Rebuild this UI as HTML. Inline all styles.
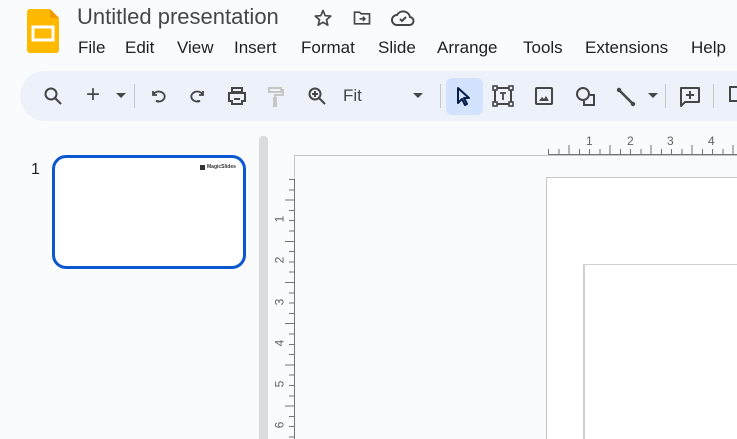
<!DOCTYPE html>
<html style="overflow:hidden;height:439px"><head><meta charset="utf-8"><style>
body{margin:0;width:737px;height:439px;overflow:hidden;background:#f9fbfd;font-family:"Liberation Sans",Arial,sans-serif;position:relative}
.a{position:absolute}
.menu span{position:absolute;top:38px;font-size:17px;color:#1f1f1f}
.tb{left:20px;top:71px;width:717px;height:50px;background:#edf2fa;border-radius:25px 0 0 25px}
svg{position:absolute;overflow:visible}
.sep{position:absolute;top:84px;width:1px;height:24px;background:#c4c7c5}
</style></head><body>
<svg style="left:27px;top:9px" width="32" height="44" viewBox="0 0 32 44"><path d="M3 0h20l9 9v32a3 3 0 0 1-3 3H3a3 3 0 0 1-3-3V3a3 3 0 0 1 3-3z" fill="#ffba00"/><path d="M23 0l9 9h-9z" fill="#f29900"/><rect x="6" y="18" width="20" height="13" fill="none" stroke="#fff" stroke-width="3"/></svg>
<div class="a" style="left:77px;top:4px;font-size:22px;color:#444746">Untitled presentation</div>
<svg style="left:313px;top:8px" width="20" height="20" viewBox="0 0 24 24"><path d="M12 3l2.6 6.2 6.7.5-5.1 4.4 1.6 6.5L12 17l-5.8 3.6 1.6-6.5-5.1-4.4 6.7-.5z" fill="none" stroke="#444746" stroke-width="2" stroke-linejoin="round"/></svg>
<svg style="left:352px;top:8px" width="20" height="20" viewBox="0 0 24 24"><path d="M3 5h6l2 2h10v12H3z" fill="none" stroke="#444746" stroke-width="2"/><path d="M9 13h6m-2-2.5L15.5 13 13 15.5" fill="none" stroke="#444746" stroke-width="2"/></svg>
<svg style="left:391px;top:8px" width="24" height="20" viewBox="0 0 24 20"><path d="M6 17a5 5 0 0 1 0-10 7 7 0 0 1 13 2 4 4 0 0 1-1 8z" fill="none" stroke="#444746" stroke-width="2"/><path d="M9 11l2 2 4-4" fill="none" stroke="#444746" stroke-width="2"/></svg>
<div class="menu"><span style="left:78px">File</span><span style="left:125px">Edit</span><span style="left:177px">View</span><span style="left:234px">Insert</span><span style="left:301px">Format</span><span style="left:378px">Slide</span><span style="left:437px">Arrange</span><span style="left:523px">Tools</span><span style="left:585px">Extensions</span><span style="left:691px">Help</span></div>
<div class="a tb"></div>
<svg style="left:43px;top:86px" width="20" height="20" viewBox="0 0 20 20"><circle cx="8" cy="8" r="5.5" fill="none" stroke="#444746" stroke-width="2"/><path d="M12 12l6 6" stroke="#444746" stroke-width="2.2"/></svg>
<div class="a" style="left:86px;top:81px;font-size:24px;color:#444746">+</div>
<svg style="left:116px;top:93px" width="10" height="6"><path d="M0 0h10L5 5z" fill="#444746"/></svg>
<div class="sep" style="left:134px"></div>
<svg style="left:149px;top:87px" width="18" height="18" viewBox="0 0 18 18"><path d="M4 4v4h4M4 8a6 5 0 1 1 3 6h3" fill="none" stroke="#444746" stroke-width="1.8"/></svg>
<svg style="left:189px;top:87px" width="18" height="18" viewBox="0 0 18 18"><path d="M14 4v4h-4M14 8a6 5 0 1 0-3 6H8" fill="none" stroke="#444746" stroke-width="1.8"/></svg>
<svg style="left:227px;top:86px" width="20" height="20" viewBox="0 0 20 20"><path d="M5 2h10v4H5zM2 7h16v8h-3v3H5v-3H2z" fill="none" stroke="#444746" stroke-width="2"/><path d="M7 13h6" stroke="#444746" stroke-width="2"/></svg>
<svg style="left:266px;top:86px" width="20" height="22" viewBox="0 0 20 22"><path d="M3 2h12v4H3zM15 4h2v5H9v3M8 12h2v8H8z" fill="none" stroke="#c4c7c5" stroke-width="2"/></svg>
<svg style="left:307px;top:86px" width="20" height="20" viewBox="0 0 20 20"><circle cx="8" cy="8" r="5.5" fill="none" stroke="#444746" stroke-width="2"/><path d="M12 12l6 6M5 8h6M8 5v6" stroke="#444746" stroke-width="2"/></svg>
<div class="a" style="left:343px;top:86px;font-size:17px;color:#444746">Fit</div>
<svg style="left:413px;top:93px" width="10" height="6"><path d="M0 0h10L5 5z" fill="#444746"/></svg>
<div class="sep" style="left:440px"></div>
<div class="a" style="left:446px;top:78px;width:37px;height:37px;background:#d3e3fd;border-radius:6px"></div>
<svg style="left:455px;top:86px" width="18" height="22" viewBox="0 0 18 22"><path d="M3 2v15l4-4 3 6 2-1-3-6h5z" fill="none" stroke="#041e49" stroke-width="2" stroke-linejoin="round"/></svg>
<svg style="left:492px;top:85px" width="22" height="22" viewBox="0 0 22 22"><rect x="3" y="3" width="16" height="16" fill="none" stroke="#444746" stroke-width="2"/><rect x="1" y="1" width="4" height="4" fill="#edf2fa" stroke="#444746" stroke-width="1.6"/><rect x="17" y="1" width="4" height="4" fill="#edf2fa" stroke="#444746" stroke-width="1.6"/><rect x="1" y="17" width="4" height="4" fill="#edf2fa" stroke="#444746" stroke-width="1.6"/><rect x="17" y="17" width="4" height="4" fill="#edf2fa" stroke="#444746" stroke-width="1.6"/><path d="M8 8h6M11 8v7" stroke="#444746" stroke-width="1.8"/></svg>
<svg style="left:535px;top:87px" width="18" height="18" viewBox="0 0 18 18"><rect x="1" y="1" width="16" height="16" rx="1" fill="none" stroke="#444746" stroke-width="2"/><path d="M4 14l3-4 2 2 2-3 3 5z" fill="#444746"/></svg>
<svg style="left:575px;top:86px" width="22" height="22" viewBox="0 0 22 22"><circle cx="8" cy="8" r="6" fill="none" stroke="#444746" stroke-width="2"/><path d="M15 9h4v10H9v-4" fill="none" stroke="#444746" stroke-width="2"/></svg>
<svg style="left:616px;top:87px" width="20" height="20" viewBox="0 0 20 20"><path d="M3 3l14 14" stroke="#444746" stroke-width="2.5"/><circle cx="3" cy="3" r="2.2" fill="#444746"/><circle cx="17" cy="17" r="2.2" fill="#444746"/></svg>
<svg style="left:648px;top:93px" width="10" height="6"><path d="M0 0h10L5 5z" fill="#444746"/></svg>
<div class="sep" style="left:665px"></div>
<svg style="left:679px;top:86px" width="22" height="22" viewBox="0 0 22 22"><path d="M2 2h18v14H6l-4 4z" fill="none" stroke="#444746" stroke-width="2" stroke-linejoin="round"/><path d="M7 9h8M11 5v8" stroke="#444746" stroke-width="2"/></svg>
<div class="sep" style="left:713px"></div>
<div class="a" style="left:729px;top:86px;width:10px;height:16px;border:2px solid #444746;box-sizing:border-box"></div>
<div class="a" style="left:31px;top:161px;font-size:16px;color:#1f1f1f">1</div>
<div class="a" style="left:52px;top:155px;width:194px;height:114px;box-sizing:border-box;border:3px solid #0b57d0;border-radius:14px;background:#fff"></div>
<div class="a" style="left:200px;top:165px;width:5px;height:5px;background:#333"></div>
<div class="a" style="left:207px;top:164px;font-size:5px;font-weight:bold;color:#333">MagicSlides</div>
<div class="a" style="left:259px;top:136px;width:9px;height:303px;background:#dadce0;border-radius:4px 4px 0 0"></div>
<div class="a" style="left:294px;top:155px;width:443px;height:284px;border-top:1px solid #c4c7c5;border-left:1px solid #c4c7c5;box-sizing:border-box"></div>
<div class="a" style="left:548px;top:149px;width:189px;height:6px;background:repeating-linear-gradient(90deg,#70757a 0 1px,transparent 1px 10.25px)"></div>
<div class="a" style="left:548px;top:145px;width:189px;height:10px;background:repeating-linear-gradient(90deg,transparent 0 20.5px,#70757a 20.5px 21.5px,transparent 21.5px 41px)"></div>
<div class="a" style="left:548px;top:154px;width:189px;height:1px;background:#70757a"></div>
<div class="a" style="font-size:12px;color:#5f6368;top:134px;left:586px">1</div>
<div class="a" style="font-size:12px;color:#5f6368;top:134px;left:627px">2</div>
<div class="a" style="font-size:12px;color:#5f6368;top:134px;left:667px">3</div>
<div class="a" style="font-size:12px;color:#5f6368;top:134px;left:708px">4</div>
<div class="a" style="left:289px;top:179px;width:6px;height:260px;background:repeating-linear-gradient(180deg,#70757a 0 1px,transparent 1px 10.3px)"></div>
<div class="a" style="left:285px;top:179px;width:10px;height:260px;background:repeating-linear-gradient(180deg,transparent 0 20.6px,#70757a 20.6px 21.6px,transparent 21.6px 41.2px)"></div>
<div class="a" style="left:294px;top:179px;width:1px;height:260px;background:#70757a"></div>
<div class="a" style="left:276px;top:212px;font-size:12px;color:#5f6368;transform:rotate(-90deg)">1</div>
<div class="a" style="left:276px;top:253px;font-size:12px;color:#5f6368;transform:rotate(-90deg)">2</div>
<div class="a" style="left:276px;top:295px;font-size:12px;color:#5f6368;transform:rotate(-90deg)">3</div>
<div class="a" style="left:276px;top:336px;font-size:12px;color:#5f6368;transform:rotate(-90deg)">4</div>
<div class="a" style="left:276px;top:377px;font-size:12px;color:#5f6368;transform:rotate(-90deg)">5</div>
<div class="a" style="left:276px;top:418px;font-size:12px;color:#5f6368;transform:rotate(-90deg)">6</div>
<div class="a" style="left:546px;top:177px;width:191px;height:262px;background:#fff;border-top:1px solid #c4c7c5;border-left:1px solid #c4c7c5;box-sizing:border-box"></div>
<div class="a" style="left:583px;top:264px;width:154px;height:175px;border-top:1px solid #d0d0d0;border-left:2px solid #d0d0d0;box-sizing:border-box"></div>
</body></html>
